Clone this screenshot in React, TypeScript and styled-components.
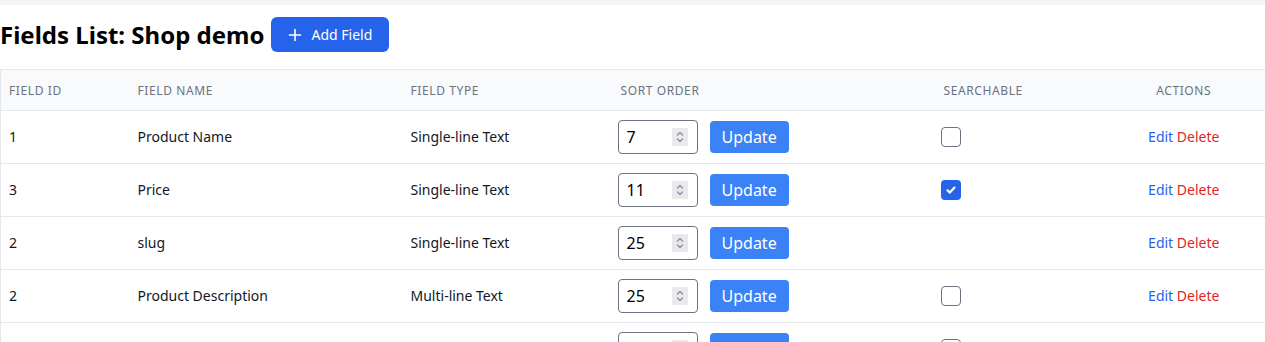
import React from "react";
import styled, { createGlobalStyle } from "styled-components";

const Global = createGlobalStyle`
  html, body { margin: 0; padding: 0; background: #fff; overflow: hidden; }
  body { font-family: "Noto Sans", sans-serif; color: #111827; }
  * { box-sizing: border-box; }
  input[type=number]::-webkit-inner-spin-button,
  input[type=number]::-webkit-outer-spin-button { -webkit-appearance: none; margin: 0; }
`;

const TopBand = styled.div`
  height: 5px;
  background: #f3f4f6;
`;

const Page = styled.div`
  padding: 0;
`;

const TitleRow = styled.div`
  display: flex;
  align-items: center;
  gap: 7px;
  margin-top: 12px;
  margin-bottom: 17px;
`;

const Title = styled.h1`
  margin: 0;
  font-size: 24px;
  font-weight: 700;
  color: #000;
  line-height: 32px;
`;

const AddButton = styled.button`
  display: inline-flex;
  align-items: center;
  gap: 9px;
  height: 35px;
  padding: 0 17px;
  border: none;
  border-radius: 6px;
  background: #2563eb;
  color: #fff;
  font-family: "Noto Sans", sans-serif;
  font-size: 14px;
`;

const TableWrap = styled.div`
  width: 1270px;
`;

const Table = styled.table`
  width: 100%;
  border-collapse: collapse;
  border: 1px solid #e5e7eb;
  table-layout: fixed;
`;

const Th = styled.th<{ $w: number; $center?: boolean }>`
  width: ${(p) => p.$w}px;
  height: 41px;
  padding: ${(p) => (p.$center ? "0 14px 0 8px" : "0 8px")};
  text-align: ${(p) => (p.$center ? "center" : "left")};
  font-size: 12px;
  font-weight: 400;
  letter-spacing: 0.05em;
  text-transform: uppercase;
  color: #6b7280;
  background: #f9fafb;
  border-bottom: 1px solid #e5e7eb;
`;

const Td = styled.td<{ $center?: boolean }>`
  height: 53px;
  padding: ${(p) => (p.$center ? "0 14px 0 8px" : "0 8px")};
  font-size: 14px;
  color: #111827;
  text-align: ${(p) => (p.$center ? "center" : "left")};
  border-bottom: 1px solid #e5e7eb;
  vertical-align: middle;
  padding-bottom: 1px;
`;

const SortCell = styled.div`
  display: flex;
  align-items: center;
  gap: 12px;
  margin-left: -3px;
`;

const InputBox = styled.div`
  position: relative;
  width: 80px;
  height: 34px;
`;

const NumberInput = styled.input`
  width: 80px;
  height: 34px;
  padding: 0 8px;
  border: 1px solid #6b7280;
  border-radius: 4px;
  font-family: "Noto Sans", sans-serif;
  font-size: 16px;
  color: #000;
  background: #fff;
`;

const Spinner = styled.span`
  position: absolute;
  right: 10px;
  top: 8px;
  width: 16px;
  height: 18px;
  background: #e9e9ed;
  display: flex;
  align-items: center;
  justify-content: center;
  pointer-events: none;
`;

const UpdateButton = styled.button`
  height: 32px;
  padding: 0 12px;
  border: none;
  border-radius: 4px;
  background: #3b82f6;
  color: #fff;
  font-family: "Noto Sans", sans-serif;
  font-size: 16px;
`;

const CheckWrap = styled.div`
  margin-left: -3px;
  display: flex;
`;

const Check = styled.span<{ $on?: boolean }>`
  display: inline-flex;
  align-items: center;
  justify-content: center;
  width: 20px;
  height: 20px;
  border-radius: 4px;
  border: ${(p) => (p.$on ? "none" : "1px solid #6b7280")};
  background: ${(p) => (p.$on ? "#2563eb" : "#fff")};
`;

const ActionLink = styled.a<{ $danger?: boolean }>`
  color: ${(p) => (p.$danger ? "#dc2626" : "#2563eb")};
  text-decoration: none;
  font-size: 14px;
`;

type Row = { id: number; name: string; type: string; order: number; search: boolean | null };

const rows: Row[] = [
  { id: 1, name: "Product Name", type: "Single-line Text", order: 7, search: false },
  { id: 3, name: "Price", type: "Single-line Text", order: 11, search: true },
  { id: 2, name: "slug", type: "Single-line Text", order: 25, search: null },
  { id: 2, name: "Product Description", type: "Multi-line Text", order: 25, search: false },
  { id: 4, name: "Image", type: "Image", order: 30, search: false },
];

export default function App() {
  return (
    <Page>
      <Global />
      <TopBand />
      <TitleRow>
        <Title>Fields List: Shop demo</Title>
        <AddButton>
          <svg width="14" height="14" viewBox="0 0 14 14" fill="none" stroke="#fff" strokeWidth="1.6" strokeLinecap="round">
            <path d="M7 1.5v11M1.5 7h11" />
          </svg>
          Add Field
        </AddButton>
      </TitleRow>
      <TableWrap>
        <Table>
          <thead>
            <tr>
              <Th $w={129}>Field ID</Th>
              <Th $w={273}>Field Name</Th>
              <Th $w={210}>Field Type</Th>
              <Th $w={323}>Sort Order</Th>
              <Th $w={168}>Searchable</Th>
              <Th $w={167} $center>Actions</Th>
            </tr>
          </thead>
          <tbody>
            {rows.map((r, i) => (
              <tr key={i}>
                <Td>{r.id}</Td>
                <Td>{r.name}</Td>
                <Td>{r.type}</Td>
                <Td>
                  <SortCell>
                    <InputBox>
                      <NumberInput type="number" defaultValue={r.order} />
                      <Spinner>
                        <svg width="10" height="14" viewBox="0 0 10 14" fill="none" stroke="#8a8a8f" strokeWidth="1.2" strokeLinecap="round" strokeLinejoin="round">
                          <path d="M2.5 5L5 2.5 7.5 5M2.5 9L5 11.5 7.5 9" />
                        </svg>
                      </Spinner>
                    </InputBox>
                    <UpdateButton>Update</UpdateButton>
                  </SortCell>
                </Td>
                <Td>
                  {r.search !== null && (
                    <CheckWrap>
                      <Check $on={r.search}>
                        {r.search && (
                          <svg width="12" height="12" viewBox="0 0 12 12" fill="none" stroke="#fff" strokeWidth="2.2" strokeLinecap="round" strokeLinejoin="round">
                            <path d="M2.5 6.3l2.3 2.3 4.7-5" />
                          </svg>
                        )}
                      </Check>
                    </CheckWrap>
                  )}
                </Td>
                <Td $center>
                  <ActionLink href="#">Edit</ActionLink> <ActionLink href="#" $danger>Delete</ActionLink>
                </Td>
              </tr>
            ))}
          </tbody>
        </Table>
      </TableWrap>
    </Page>
  );
}
